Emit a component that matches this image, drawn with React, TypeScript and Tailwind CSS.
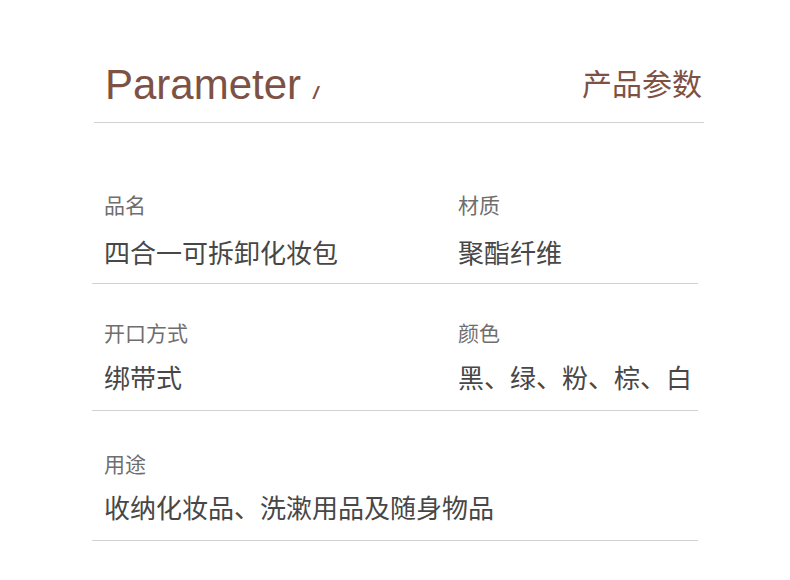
import React from "react";

const font = { fontFamily: '"Liberation Sans", "Noto Sans CJK SC", sans-serif' };

type Cell = { label: string; value: string; wide?: boolean };

function Field({ label, value, wide, gap }: Cell & { gap: string }) {
  return (
    <div className={`flex flex-col ${wide ? "col-span-2" : ""}`}>
      <div className="text-[21px] leading-[20px] text-[#6e6e6e]">{label}</div>
      <div className={`${gap} text-[26px] leading-[30px] text-[#474747] whitespace-nowrap`}>{value}</div>
    </div>
  );
}

function Row({ cells, pt, pb, gap }: { cells: Cell[]; pt: string; pb: string; gap: string }) {
  return (
    <div className={`grid grid-cols-[354px_1fr] border-b border-[#d2d2d2] pl-3 ${pt} ${pb}`}>
      {cells.map((c) => (
        <Field key={c.label} gap={gap} {...c} />
      ))}
    </div>
  );
}

export default function App() {
  return (
    <div className="w-[790px] h-[580px] bg-white overflow-hidden" style={font}>
      <div className="ml-[94px] w-[610px] pt-[64px] border-b border-[#d2d2d2] pb-[16px] pl-[11px] pr-[2px] flex items-end justify-between">
        <div className="flex items-baseline text-[#7d5245]">
          <span className="text-[42px] leading-[42px]">Parameter</span>
          <span className="ml-[12px] text-[19px] leading-[19px] italic font-bold">/</span>
        </div>
        <div className="text-[30px] leading-[30px] text-[#7d5245] mb-[6px]">产品参数</div>
      </div>
      <div className="ml-[92px] w-[606px] mt-[30px]">
        <Row
          pt="pt-[43px]"
          pb="pb-[14px]"
          gap="mt-[23px]"
          cells={[
            { label: "品名", value: "四合一可拆卸化妆包" },
            { label: "材质", value: "聚酯纤维" },
          ]}
        />
        <Row
          pt="pt-[40px]"
          pb="pb-[16px]"
          gap="mt-[20px]"
          cells={[
            { label: "开口方式", value: "绑带式" },
            { label: "颜色", value: "黑、绿、粉、棕、白" },
          ]}
        />
        <Row
          pt="pt-[44px]"
          pb="pb-[16px]"
          gap="mt-[19px]"
          cells={[{ label: "用途", value: "收纳化妆品、洗漱用品及随身物品", wide: true }]}
        />
      </div>
    </div>
  );
}
